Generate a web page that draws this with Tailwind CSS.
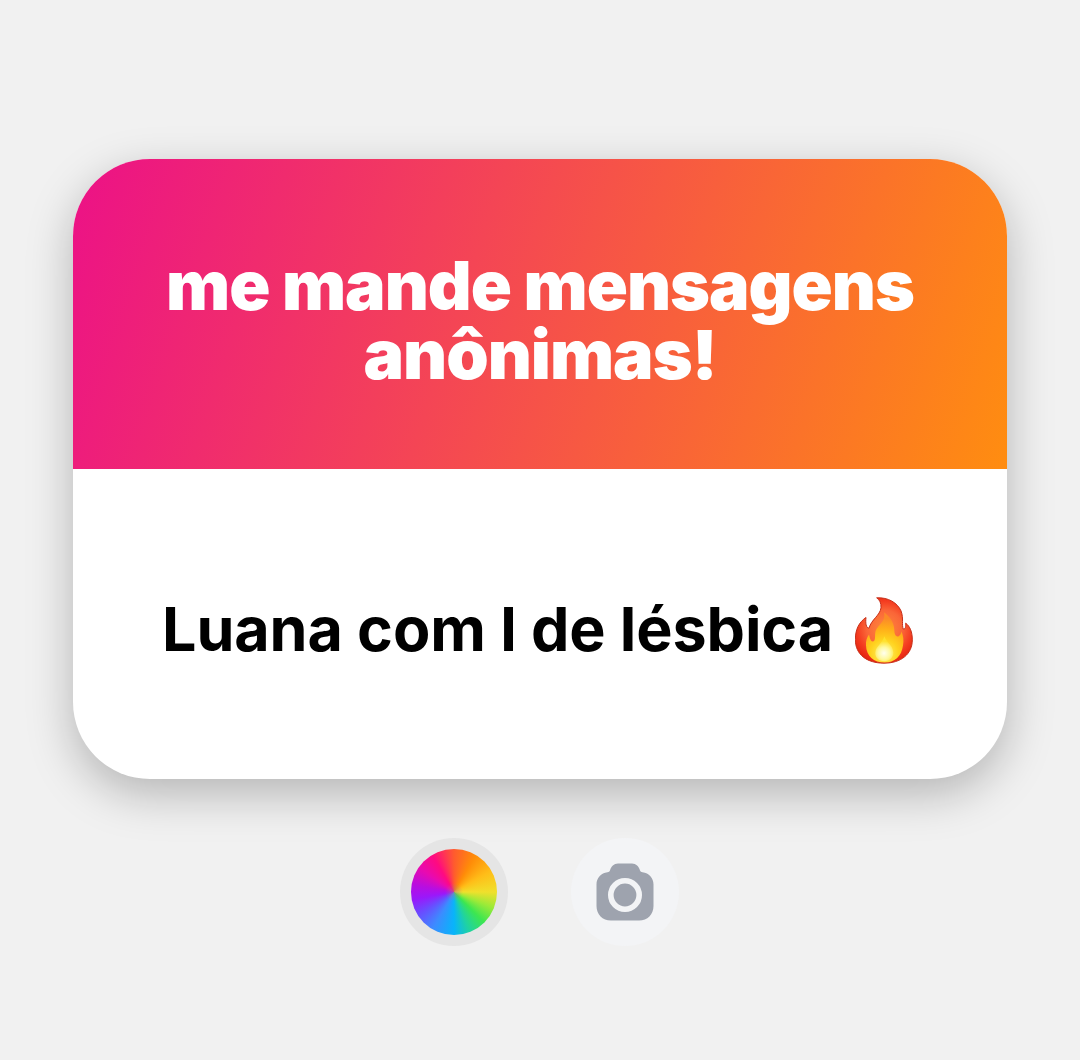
<!DOCTYPE html>
<html lang="pt">
<head>
<meta charset="utf-8">
<title>Mensagens anônimas</title>
<script src="https://cdn.jsdelivr.net/npm/@tailwindcss/browser@4"></script>
</head>
<body class="bg-[#f1f1f1] font-['Inter',sans-serif]">
<main class="flex h-[1060px] w-[1080px] flex-col items-center overflow-hidden pt-[159px]">
  <section class="h-[620px] w-[934px] shrink-0 overflow-hidden rounded-[77px] bg-white shadow-[0_15px_46px_rgba(0,0,0,0.25)]">
    <header class="flex h-[310px] flex-col items-center bg-[linear-gradient(108deg,#ec1187_0%,#ff8d10_100%)] pt-[92px] text-[68px] leading-[69px] font-black whitespace-nowrap text-white">
      <h1 class="text-center tracking-[-1px]">me mande mensagens<br>anônimas!</h1>
    </header>
    <div class="flex h-[310px] items-start pt-[123px] pl-[89px] text-[61px] leading-[74px] font-[660] whitespace-nowrap text-black">
      <p class="w-[693px] tracking-[-0.1px]">Luana com l de lésbica</p>
      <svg class="mt-[5px] h-[67px] w-[58px] shrink-0" viewBox="45 36 174 200" role="img" aria-label="fogo">
        <defs>
          <radialGradient id="outer" gradientUnits="userSpaceOnUse" cx="134" cy="130" r="108">
            <stop offset="0" stop-color="#ff8a3c"/><stop offset=".5" stop-color="#fa6638"/><stop offset=".76" stop-color="#f43c20"/><stop offset="1" stop-color="#e4220e"/>
          </radialGradient>
          <radialGradient id="inner" gradientUnits="userSpaceOnUse" cx="133" cy="205" r="105">
            <stop offset="0" stop-color="#fff36a"/><stop offset=".4" stop-color="#ffd21e"/><stop offset=".72" stop-color="#ffad19"/><stop offset="1" stop-color="#fb8b28"/>
          </radialGradient>
          <radialGradient id="core" gradientUnits="userSpaceOnUse" cx="132" cy="204" r="36">
            <stop offset="0" stop-color="#fffff0"/><stop offset=".5" stop-color="#fff9a0"/><stop offset="1" stop-color="#ffe12d"/>
          </radialGradient>
        </defs>
        <path d="M110 38C145 36 172 53 183 77C192 101 184 119 190 132C199 131 197 120 197 114C210 123 217 141 217 164C217 207 183 234 132 234C80 234 46 208 46 163C46 133 57 111 78 97C76 113 78 129 87 129C94 103 120 91 123 68C124 54 119 44 110 38Z" fill="url(#outer)" stroke="#c5301a" stroke-width="3" stroke-linejoin="round"/>
        <path d="M132 81C155 99 163 117 163 137C163 150 170 157 176 153C181 150 184 144 184 138C190 151 192 165 189 181C184 215 164 232 134 232C101 232 79 213 78 180C77 169 80 158 87 148C89 156 91 168 98 169C108 168 104 151 106 141C111 119 139 110 132 81Z" fill="url(#inner)"/>
        <path d="M133 153C137 170 159 179 160 202C160 218 149 228 133 228C116 228 105 218 106 202C107 183 128 174 133 153Z" fill="url(#core)"/>
      </svg>
    </div>
  </section>
  <nav class="mt-[59px] mr-[2px] flex gap-[63px]">
    <button class="flex size-[108px] items-center justify-center rounded-full bg-[#e5e5e5]" aria-label="Cor">
      <span class="size-[86px] overflow-hidden rounded-full bg-[conic-gradient(#ff5b2e_0deg,#ff8c08_30deg,#ffbd18_60deg,#f0e02c_90deg,#9cea38_112deg,#3de650_135deg,#20d3a0_158deg,#08b4fa_180deg,#3c8cff_210deg,#6a4cff_238deg,#9a18fa_260deg,#b80ee0_280deg,#e80ab0_305deg,#ff0a80_330deg,#ff5b2e_360deg)]">
        <span class="block size-full bg-[radial-gradient(circle,rgba(170,120,130,0.55)_0,rgba(170,120,130,0)_9px)]"></span>
      </span>
    </button>
    <button class="flex size-[108px] items-center justify-center rounded-full bg-[#f3f4f6]" aria-label="Câmera">
      <svg class="size-[58px]" viewBox="0 0 58 58" fill="none">
        <path d="M22 0.5H36C40 0.5 43 3.5 44 7.5Q44.500 9 46.500 9.300C53 10 57.500 15 57.500 21.500V43C57.500 51.500 51.500 57.500 43 57.500H15C6.500 57.500 .5 51.500 .5 43V21.500C.5 15 5 10 11.500 9.300Q13.500 9 14 7.500C15 3.500 18 .5 22 .5Z" fill="#9ea3ae"/>
        <circle cx="29" cy="32" r="14.200" stroke="#f3f4f6" stroke-width="5.600"/>
      </svg>
    </button>
  </nav>
</main>
</body>
</html>
